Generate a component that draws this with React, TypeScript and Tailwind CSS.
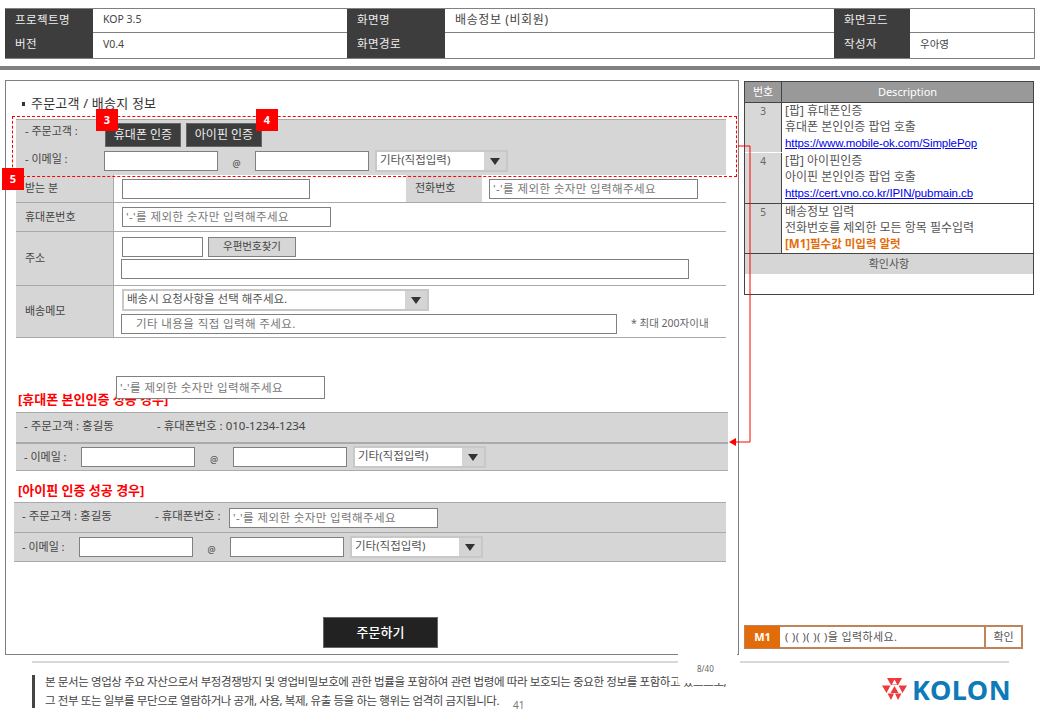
import React from "react";

const cellLabel = "flex items-center pl-[10px] pb-[3px] bg-[#3d3d3d] text-[#eeeeee] text-[11.5px] tracking-[0.4px]";
const cellValue = "flex items-center pl-[10px] pb-[2px] text-[#444] text-[10.5px]";

function Field({ className = "", placeholder }: { className?: string; placeholder?: string }) {
  return (
    <div className={`flex items-center bg-white border border-[#808080] text-[11.5px] text-[#777] tracking-[0.4px] whitespace-nowrap overflow-hidden ${className}`}>
      {placeholder}
    </div>
  );
}

function SelectBox({ label, className = "" }: { label: string; className?: string }) {
  return (
    <div className={`flex h-[22px] border-2 border-[#c8c8c8] bg-white ${className}`}>
      <div className="flex-1 pl-[3px] text-[11.5px] leading-[16px] text-[#555] whitespace-nowrap overflow-hidden">{label}</div>
      <div className="w-[22px] bg-[#d4d4d4] flex items-center justify-center">
        <div className="w-0 h-0 border-x-[5px] border-x-transparent border-t-[7px] border-t-[#333]" />
      </div>
    </div>
  );
}

function EmailRow({ labelW, className, atW }: { labelW: string; className: string; atW: string }) {
  return (
    <div className={`flex items-center ${className}`}>
      <span className={`text-[11px] text-[#444] whitespace-nowrap ${labelW}`}>- 이메일 :</span>
      <Field className="w-[114px] h-[20px]" />
      <span className={`pt-[6px] text-center text-[9px] text-[#444] ${atW}`}>@</span>
      <Field className="w-[114px] h-[20px]" />
      <SelectBox label="기타(직접입력)" className="ml-[6px] w-[133px]" />
    </div>
  );
}

function FormRow({ label, className, children }: { label: string; className: string; children: React.ReactNode }) {
  return (
    <div className={`flex border-b border-[#aaaaaa] ${className}`}>
      <div className="w-[98px] bg-[#d6d6d6] flex items-center pl-[9px] text-[11px] text-[#444] border-r border-[#aaaaaa]">{label}</div>
      {children}
    </div>
  );
}

function DescRow({ no, className, children }: { no: string; className: string; children: React.ReactNode }) {
  return (
    <div className={`flex border-b border-[#444] ${className}`}>
      <div className="w-[37px] bg-[#d8d8d8] border-r border-[#444] text-center text-[10px] text-[#666] pt-[1px]">{no}</div>
      <div className="flex-1 pl-[3px] text-[12px] leading-[16px] text-[#555] whitespace-nowrap">{children}</div>
    </div>
  );
}

function Badge({ n, className }: { n: string; className: string }) {
  return (
    <div className={`absolute w-[22px] h-[22px] bg-[#ff0000] text-white text-[11px] font-bold flex items-center justify-center ${className}`}>
      {n}
    </div>
  );
}

export default function App() {
  return (
    <div className="relative w-[1040px] h-[720px] overflow-hidden bg-white [font-family:'Noto_Sans','Noto_Sans_CJK_KR',sans-serif]">
      {/* document header */}
      <div className="pt-[8px] px-[5px]">
        <div className="grid grid-cols-[88px_254px_98px_389px_76px_125px] grid-rows-[24px_25px] border-y border-[#808080] border-r">
          <div className={cellLabel}>프로젝트명</div>
          <div className={`${cellValue} border-b border-[#808080]`}>KOP 3.5</div>
          <div className={cellLabel}>화면명</div>
          <div className={`${cellValue} border-b border-[#808080] text-[12px] tracking-[0.6px]`}>배송정보 (비회원)</div>
          <div className={cellLabel}>화면코드</div>
          <div className={`${cellValue} border-b border-[#808080]`} />
          <div className={cellLabel}>버전</div>
          <div className={cellValue}>V0.4</div>
          <div className={cellLabel}>화면경로</div>
          <div className={cellValue} />
          <div className={cellLabel}>작성자</div>
          <div className={cellValue}>우아영</div>
        </div>
      </div>
      <div className="mt-[7px] h-[4px] bg-[#808080]" />

      <div className="flex mt-[10px] pl-[5px] h-[575px]">
        {/* left wireframe panel */}
        <div className="w-[734px] h-full border border-[#808080] pl-[10px] flex flex-col">
          <div className="mt-[15px] h-[16px] pl-[6px] flex items-center text-[13px] text-[#333] tracking-[0.2px]">
            <span className="w-[3px] h-[4px] bg-[#333] mr-[6px]" />주문고객 / 배송지 정보
          </div>

          <div className="mt-[7px] w-[710px] h-[56px] bg-[#d6d6d6] border-t border-[#aaaaaa] pl-[9px]">
            <div className="flex items-start h-[27px] pt-[3px]">
              <span className="w-[80px] text-[11px] text-[#444]">- 주문고객 :</span>
              <button className="w-[76px] h-[24px] bg-[#3d3d3d] border border-[#666] text-[12px] text-[#eee]">휴대폰 인증</button>
              <button className="ml-[5px] w-[76px] h-[24px] bg-[#3d3d3d] border border-[#666] text-[12px] text-[#eee]">아이핀 인증</button>
            </div>
            <EmailRow labelW="w-[79px] pb-[4px]" atW="w-[37px]" className="h-[28px]" />
          </div>

          <FormRow label="받는 분" className="w-[710px] h-[28px]">
            <div className="flex items-center flex-1 pl-[8px]">
              <Field className="w-[188px] h-[20px]" />
              <div className="ml-[96px] w-[76px] h-full bg-[#d6d6d6] flex items-center pl-[9px] text-[11px] text-[#444]">전화번호</div>
              <Field className="ml-[7px] w-[209px] h-[20px] pl-[3px]" placeholder="'-'를 제외한 숫자만 입력해주세요" />
            </div>
          </FormRow>
          <FormRow label="휴대폰번호" className="w-[710px] h-[29px]">
            <div className="flex items-center flex-1 pl-[8px]">
              <Field className="w-[209px] h-[20px] pl-[3px]" placeholder="'-'를 제외한 숫자만 입력해주세요" />
            </div>
          </FormRow>
          <FormRow label="주소" className="w-[710px] h-[54px]">
            <div className="flex flex-col flex-1 pl-[7px] pt-[5px] gap-[2px]">
              <div className="flex pl-[1px]">
                <Field className="w-[81px] h-[20px]" />
                <div className="ml-[5px] w-[88px] h-[20px] bg-[#d6d6d6] border border-[#808080] flex items-center justify-center text-[10.5px] text-[#444]">우편번호찾기</div>
              </div>
              <Field className="w-[568px] h-[20px]" />
            </div>
          </FormRow>
          <FormRow label="배송메모" className="w-[710px] h-[52px]">
            <div className="flex flex-col flex-1 pl-[7px] pt-[3px] gap-[3px]">
              <SelectBox label="배송시 요청사항을 선택 해주세요." className="ml-[1px] w-[307px] h-[21px]" />
              <div className="flex items-center">
                <Field className="w-[496px] h-[20px] pl-[14px]" placeholder="기타 내용을 직접 입력해 주세요." />
                <span className="ml-[14px] text-[10.5px] text-[#666]">* 최대 200자이내</span>
              </div>
            </div>
          </FormRow>

          <div className="mt-[54px] h-[16px] pl-[2px] flex items-center text-[13px] font-bold text-[#ff0000]">[휴대폰 본인인증 성공 경우]</div>
          <div className="mt-[4px] w-[712px] bg-[#d6d6d6] border-y border-[#aaaaaa]">
            <div className="flex items-center h-[29px] pl-[8px] pb-[3px] text-[11.5px] text-[#444]">
              <span className="w-[133px]">- 주문고객 : 홍길동</span>
              <span>- 휴대폰번호 : 010-1234-1234</span>
            </div>
            <div className="border-t-2 border-[#aaaaaa]">
              <EmailRow labelW="w-[57px]" atW="w-[38px]" className="h-[26px] pl-[8px]" />
            </div>
          </div>

          <div className="mt-[12px] h-[16px] pl-[2px] flex items-center text-[13px] font-bold text-[#ff0000]">[아이핀 인증 성공 경우]</div>
          <div className="mt-[3px] -ml-[2px] w-[712px] bg-[#d6d6d6] border-y border-[#aaaaaa]">
            <div className="flex items-center h-[29px] pl-[8px] text-[11.5px] text-[#444]">
              <span className="w-[133px] pb-[3px]">- 주문고객 : 홍길동</span>
              <span className="w-[74px] pb-[3px] whitespace-nowrap">- 휴대폰번호 :</span>
              <Field className="w-[209px] h-[20px] pl-[3px]" placeholder="'-'를 제외한 숫자만 입력해주세요" />
            </div>
            <div className="border-t border-[#aaaaaa]">
              <EmailRow labelW="w-[57px]" atW="w-[37px]" className="h-[28px] pl-[8px]" />
            </div>
          </div>

          <button className="mt-[55px] ml-[307px] w-[115px] h-[31px] bg-[#222] border border-[#666] text-[13px] font-medium text-white">주문하기</button>
        </div>

        {/* right description column */}
        <div className="ml-[5px] w-[290px] flex flex-col">
          <div className="mt-[1px] border-x border-t border-[#444] bg-white">
            <div className="flex h-[21px] bg-[#999999] border-b border-[#444] text-[11px] text-white items-center">
              <div className="w-[37px] text-center border-r border-[#444] h-full leading-[20px]">번호</div>
              <div className="flex-1 text-center">Description</div>
            </div>
            <DescRow no="3" className="h-[50px] border-white">
              [팝] 휴대폰인증<br />휴대폰 본인인증 팝업 호출<br />
              <span className="[font-family:'Liberation_Sans',sans-serif] text-[11.5px] tracking-[-0.1px] text-[#0000ee] underline">https://www.mobile-ok.com/SimplePop</span>
            </DescRow>
            <DescRow no="4" className="h-[51px]">
              [팝] 아이핀인증<br />아이핀 본인인증 팝업 호출<br />
              <span className="[font-family:'Liberation_Sans',sans-serif] text-[11.5px] tracking-[-0.1px] text-[#0000ee] underline">https://cert.vno.co.kr/IPIN/pubmain.cb</span>
            </DescRow>
            <DescRow no="5" className="h-[50px]">
              배송정보 입력<br />전화번호를 제외한 모든 항목 필수입력<br />
              <span className="text-[11.5px] font-bold text-[#e36c0a]">[M1]필수값 미입력 알럿</span>
            </DescRow>
            <div className="h-[20px] bg-[#d6d6d6] text-center text-[11px] leading-[20px] text-[#555]">확인사항</div>
            <div className="h-[21px] border-b border-[#444]" />
          </div>

          <div className="mt-[330px] flex w-[279px] h-[24px] border-2 border-[#c0845a] text-[11px] text-[#555]">
            <div className="w-[35px] -m-[1px] bg-[#e36c0a] text-white text-[11px] font-bold flex items-center justify-center">M1</div>
            <div className="flex-1 pl-[6px] flex items-center tracking-[0.4px]">(   )(   )(   )(   )을 입력하세요.</div>
            <div className="w-[37px] border-l-2 border-[#c0845a] flex items-center justify-center">확인</div>
          </div>
        </div>
      </div>

      {/* footer */}
      <div className="flex mt-[6px]">
        <div className="ml-[32px] w-[646px] h-[2px] bg-[#d8d8d8]" />
        <div className="ml-[62px] w-[269px] h-[2px] bg-[#d8d8d8]" />
      </div>
      <div className="flex mt-[12px] ml-[32px]">
        <div className="w-[3px] h-[33px] bg-[#444]" />
        <div className="ml-[10px] w-[680px] text-[11.5px] leading-[19px] tracking-[-0.4px] text-[#444] whitespace-nowrap -mt-[3px]">
          <span className="tracking-[-0.39px]">본 문서는 영업상 주요 자산으로서 부정경쟁방지 및 영업비밀보호에 관한 법률을 포함하여 관련 법령에 따라 보호되는 중요한 정보를 포함하고 있으므로,</span><br />
          그 전부 또는 일부를 무단으로 열람하거나 공개, 사용, 복제, 유출 등을 하는 행위는 엄격히 금지됩니다.
        </div>
        <div className="ml-[157px] -mt-[7px] flex items-center gap-[5px]">
          <svg width="25" height="22" viewBox="0 0 25 22">
            <g fill="#ee3a3a">
              <path d="M5 0H20L16 7H9ZM12.500 1.500 9.800 6.500H15.200Z" fillRule="evenodd" />
              <path d="M0 7.500H8.500L4.500 15ZM16.500 7.500H25L20.500 15Z" />
              <path d="M12.500 8 8.500 15H16.500Z" />
              <path d="M5.500 15.500H12L9 22ZM13 15.500H19.500L16 22Z" />
            </g>
          </svg>
          <span className="text-[27px] leading-none font-bold text-[#0f7ab8] tracking-[0.5px]">KOLON</span>
        </div>
      </div>

      {/* annotations over the wireframe */}
      <div className="absolute left-[12px] top-[116px] w-[725px] h-[61px] border border-dashed border-[#ff0000]" />
      <Badge n="3" className="left-[96px] top-[109px]" />
      <Badge n="4" className="left-[256px] top-[109px]" />
      <Badge n="5" className="left-[2px] top-[168px]" />
      <svg className="absolute left-[725px] top-[140px]" width="30" height="310" viewBox="0 0 30 310">
        <path d="M13 6H25V302H8" fill="none" stroke="#ff0000" strokeWidth="1" />
        <path d="M4 302l7-4v8z" fill="#ff0000" />
      </svg>
      <Field className="absolute left-[116px] top-[376px] w-[209px] h-[23px] pl-[3px]" placeholder="'-'를 제외한 숫자만 입력해주세요" />
      <div className="absolute left-[678px] top-[652px] w-[59px] h-[31px] bg-white text-[8px] text-[#666] pl-[19px] pt-[11px]">8/40</div>
      <div className="absolute left-[513px] top-[698px] text-[10px] text-[#777]">41</div>
    </div>
  );
}
